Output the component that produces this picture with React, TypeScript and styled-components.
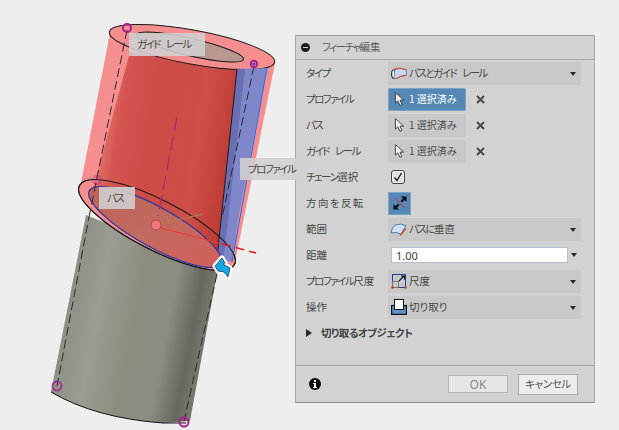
import React from 'react';
import styled, { createGlobalStyle } from 'styled-components';

const GlobalStyle = createGlobalStyle`
    html, body {
        margin: 0;
        padding: 0;
        background: #eeeeee;
    }
    * {
        box-sizing: border-box;
    }
`

const Dashes = styled.line`
    stroke: #2c2c2c;
    stroke-width: 1;
    stroke-dasharray: 9 4;
`

const Ring = styled.circle`
    fill: none;
    stroke: #a5208f;
    stroke-width: 2;
`

const ARROW = 'M215,266 L222,258 L225,263 L223,264 L230,268 L228,277 L224,272 L218,271 Z'

const ModelDrawing = () => (
    <svg width="295" height="430" viewBox="0 0 295 430">
        <defs>
            <linearGradient id="steel" gradientUnits="userSpaceOnUse" x1="52" y1="300" x2="218" y2="332">
                <stop offset="0" stopColor="#84847b" />
                <stop offset="0.12" stopColor="#8f9086" />
                <stop offset="0.28" stopColor="#9b9c92" />
                <stop offset="0.5" stopColor="#8d8d7e" />
                <stop offset="0.7" stopColor="#8b8c83" />
                <stop offset="0.85" stopColor="#67675f" />
                <stop offset="1" stopColor="#85857c" />
            </linearGradient>
            <linearGradient id="bore" gradientUnits="userSpaceOnUse" x1="88" y1="110" x2="240" y2="135">
                <stop offset="0" stopColor="#f58f8b" />
                <stop offset="0.22" stopColor="#d4544f" />
                <stop offset="0.45" stopColor="#cc4b45" />
                <stop offset="0.75" stopColor="#cd4f48" />
                <stop offset="1" stopColor="#bc3832" />
            </linearGradient>
            <linearGradient id="cutFace" gradientUnits="userSpaceOnUse" x1="85" y1="190" x2="220" y2="265">
                <stop offset="0" stopColor="#bb6157" />
                <stop offset="0.5" stopColor="#c26a60" />
                <stop offset="1" stopColor="#d25e58" />
            </linearGradient>
        </defs>

        <path d="M86,215 L51,392 Q95,418 163,423 L190,421 L218,268 Z" fill="url(#steel)" />
        <path d="M51,392 Q95,418 163,423 L186,423" fill="none" stroke="#111" strokeWidth="1" />

        <path d="M110,33 L275,63 L235,262 L80,188 Z" fill="#f58f8f" />
        <ellipse cx="157" cy="225" rx="87" ry="25" transform="rotate(27 157 225)" fill="#f58f8f" stroke="#1a1a1a" />
        <path d="M130,52 L238,70 L217,255 L214,268 L92,192 Z" fill="url(#bore)" />

        <ellipse cx="192" cy="47" rx="84" ry="17" transform="rotate(10.4 192 47)" fill="#f58f8f" stroke="#1a1a1a" />
        <ellipse cx="190" cy="47" rx="55" ry="8.7" transform="rotate(13 190 47)" fill="#b9978f" stroke="#1a1a1a" />

        <path d="M237,69 L267,68 L238,220 L232,262 L217,258 Z" fill="#7f87ca" />
        <path d="M237,69 L245,69 L224,256 L217,258 Z" fill="#6a6eb2" />
        <line x1="237" y1="69" x2="217" y2="258" stroke="#1a1a1a" />
        <line x1="267" y1="68" x2="232" y2="262" stroke="#1f6cf0" />

        <ellipse cx="155" cy="227" rx="75" ry="20" transform="rotate(29 155 227)" fill="url(#cutFace)" stroke="#2338a8" strokeWidth="1.2" />
        <ellipse cx="157" cy="225" rx="87" ry="25" transform="rotate(27 157 225)" fill="none" stroke="#1a1a1a" />

        <Dashes x1="127" y1="30" x2="90" y2="212" />
        <Dashes x1="90" y1="212" x2="57" y2="386" />
        <Dashes x1="254" y1="66" x2="222" y2="218" />
        <Dashes x1="217" y1="274" x2="184" y2="421" />

        <line x1="177" y1="117" x2="158" y2="216" stroke="#b32c6e" strokeWidth="1.5" strokeDasharray="14 6" />
        <line x1="155" y1="225" x2="203" y2="214" stroke="#a8843a" strokeWidth="1" />
        <line x1="158" y1="227" x2="222" y2="244" stroke="#ee3a3a" strokeWidth="1.2" />
        <line x1="222" y1="244" x2="256" y2="253" stroke="#e8141c" strokeWidth="1.5" strokeDasharray="9 5" />
        <circle cx="156" cy="225" r="5" fill="#ef7a7a" stroke="#c43c58" strokeWidth="1" />

        <Ring cx="127" cy="28" r="4" />
        <Ring cx="97" cy="180" r="4" opacity="0.4" />
        <Ring cx="254" cy="64" r="3.2" />
        <circle cx="254" cy="64" r="1.6" fill="#5a3aa8" />
        <Ring cx="57" cy="386" r="4.5" opacity="0.75" />
        <Ring cx="184" cy="422" r="4.5" />

        <path d={ARROW} fill="#ffffff" stroke="#ffffff" strokeWidth="5" strokeLinejoin="round" />
        <path d={ARROW} fill="#12a8e6" stroke="#10303f" strokeWidth="0.7" strokeLinejoin="round" />
    </svg>
)

const PathRailIcon = () => (
    <svg width="16" height="13" viewBox="0 0 16 13">
        <ellipse cx="2.6" cy="7" rx="2" ry="4.2" fill="#f4f4f4" stroke="#222" strokeWidth="1.1" />
        <path d="M4,2.5 Q9,0 15.5,3 L15.5,8 Q10,8 6,11.5 L3,11.5 Z" fill="#c6d8ea" stroke="#5b7fa8" strokeWidth="0.8" />
        <path d="M3,2.5 Q9,-0.2 15.5,3" fill="none" stroke="#d8413a" strokeWidth="1.2" />
        <path d="M5,11.5 Q10,8.5 15.5,8.5" fill="none" stroke="#d8413a" strokeWidth="1" />
    </svg>
)

const NormalIcon = () => (
    <svg width="17" height="13" viewBox="0 0 17 13">
        <path d="M1,10 Q2,4 5,2 Q11,0 16,2.5 L14,6 L11,11 Q7,8.5 1,10 Z" fill="#cfe0f0" stroke="#4f7cb0" strokeWidth="1" />
        <line x1="10" y1="12.5" x2="16" y2="5.5" stroke="#d8412f" strokeWidth="1.2" />
    </svg>
)

const ScaleIcon = () => (
    <svg width="16" height="16" viewBox="0 0 16 16">
        <rect x="1.5" y="1.5" width="13" height="13" fill="none" stroke="#1c3f9c" strokeWidth="1" />
        <rect x="1.5" y="8.5" width="6" height="6" fill="none" stroke="#777" strokeWidth="1" />
        <path d="M8,8 L13,3 M10,3 L13.5,3 L13.5,6.5" fill="none" stroke="#111" strokeWidth="1.1" />
        <circle cx="1.5" cy="14.5" r="1.2" fill="#c8322c" />
        <circle cx="14.5" cy="14.5" r="1.2" fill="#c8322c" />
    </svg>
)

const CutIcon = () => (
    <svg width="16" height="16" viewBox="0 0 16 16">
        <rect x="0.6" y="6.5" width="14.8" height="8.9" fill="#5c94c8" stroke="#111" strokeWidth="1.2" />
        <rect x="3.5" y="0.5" width="9" height="10" fill="#ffffff" stroke="#111" strokeWidth="1" />
    </svg>
)

const ArrowCursor = () => (
    <svg width="11" height="16" viewBox="0 0 12 16">
        <path d="M1.5,1 L1.5,12.5 L4.2,10 L6.5,15 L8.6,14 L6.5,9.2 L10.5,9.2 Z" fill="#f4f4f4" stroke="#3a3a3a" strokeWidth="1" />
    </svg>
)

const FlipIcon = () => (
    <svg width="14" height="14" viewBox="0 0 14 14">
        <path d="M0.5,13.5 L0.5,8 L2.5,10 L5,7.5 L6.5,9 L4,11.5 L6,13.5 Z" fill="#0c0c0c" />
        <path d="M13.5,0.5 L13.5,6 L11.5,4 L9,6.5 L7.5,5 L10,2.5 L8,0.5 Z" fill="#0c0c0c" />
        <line x1="2" y1="2" x2="12" y2="12" stroke="#e0202c" strokeWidth="1" />
    </svg>
)

const RemoveIcon = () => (
    <svg width="9" height="9" viewBox="0 0 9 9">
        <path d="M1,1 L8,8 M8,1 L1,8" stroke="#4a4a4a" strokeWidth="2" />
    </svg>
)

const InfoIcon = () => (
    <svg width="12" height="12" viewBox="0 0 12 12">
        <circle cx="6" cy="6" r="6" fill="#0a0a0a" />
        <rect x="5" y="2" width="2" height="2" fill="#ffffff" />
        <path d="M4,5 H7 V9 H8 V10 H4 V9 H5 V6 H4 Z" fill="#ffffff" />
    </svg>
)

const CheckMark = () => (
    <svg width="10" height="10" viewBox="0 0 10 10">
        <path d="M1.5,5.5 L4,8.5 L8.5,1" fill="none" stroke="#111" strokeWidth="1.3" />
    </svg>
)

const Dropdown = ({ icon, children }: { icon: React.ReactNode; children: React.ReactNode }) => (
    <DropdownBox>
        <DropdownIcon>{icon}</DropdownIcon>
        <span>{children}</span>
        <Caret />
    </DropdownBox>
)

const Selection = ({ active }: { active?: boolean }) => (
    <>
        <SelectButton $active={active}>
            <ArrowCursor />
            <span>1 選択済み</span>
        </SelectButton>
        <RemoveSlot>
            <RemoveIcon />
        </RemoveSlot>
    </>
)

const App = () => {
    return (
        <Page>
            <GlobalStyle />
            <Viewport>
                <ModelDrawing />
                <Callout $left={129} $top={33} $width={76} $height={23}><Kana>ガイド レール</Kana></Callout>
                <Callout $left={99} $top={187} $width={36} $height={22}><Kana>パス</Kana></Callout>
                <Callout $left={240} $top={158} $width={66} $height={22}><Kana>プロファイル</Kana></Callout>
            </Viewport>
            <Panel>
                <PanelTitle>
                    <MinusBadge />
                    <span><Kana>フィーチャ</Kana>編集</span>
                </PanelTitle>
                <PanelBody>
                    <Row>
                        <Label><Kana>タイプ</Kana></Label>
                        <Dropdown icon={<PathRailIcon />}><Kana>パスとガイド レール</Kana></Dropdown>
                    </Row>
                    <Row>
                        <Label><Kana>プロファイル</Kana></Label>
                        <Selection active />
                    </Row>
                    <Row>
                        <Label><Kana>パス</Kana></Label>
                        <Selection />
                    </Row>
                    <Row>
                        <Label><Kana>ガイド レール</Kana></Label>
                        <Selection />
                    </Row>
                    <Row>
                        <Label><Kana>チェーン</Kana>選択</Label>
                        <CheckBox>
                            <CheckMark />
                        </CheckBox>
                    </Row>
                    <Row>
                        <Label><Airy>方向を反転</Airy></Label>
                        <FlipButton>
                            <FlipIcon />
                        </FlipButton>
                    </Row>
                    <Row>
                        <Label>範囲</Label>
                        <Dropdown icon={<NormalIcon />}><Kana>パスに</Kana>垂直</Dropdown>
                    </Row>
                    <Row>
                        <Label>距離</Label>
                        <DistanceInput>1.00</DistanceInput>
                        <InputCaret />
                    </Row>
                    <Row>
                        <Label><Kana>プロファイル</Kana>尺度</Label>
                        <Dropdown icon={<ScaleIcon />}>尺度</Dropdown>
                    </Row>
                    <Row>
                        <Label>操作</Label>
                        <Dropdown icon={<CutIcon />}>切り取り</Dropdown>
                    </Row>
                    <Row>
                        <SectionArrow />
                        <SectionTitle>切り取るオブジェクト</SectionTitle>
                    </Row>
                </PanelBody>
                <PanelFooter>
                    <InfoIcon />
                    <FooterButtons>
                        <OkButton>OK</OkButton>
                        <CancelButton>キャンセル</CancelButton>
                    </FooterButtons>
                </PanelFooter>
            </Panel>
        </Page>
    );
};

export default App;

const Page = styled.div`
    display: flex;
    align-items: flex-start;
    width: 619px;
    height: 430px;
    overflow: hidden;
    background: #eeeeee;
    color: #484848;
    font-family: "Noto Sans CJK JP", "Noto Sans", sans-serif;
    font-size: 10.5px;
    font-feature-settings: "palt";
    line-height: 1;
`

const Kana = styled.span`
    letter-spacing: -1.5px;
    word-spacing: 5px;
`

const Airy = styled.span`
    letter-spacing: 1.4px;
`

const Viewport = styled.div`
    position: relative;
    flex: 0 0 295px;
    height: 430px;

    svg {
        display: block;
    }
`

const Callout = styled.div<{ $left: number; $top: number; $width: number; $height: number }>`
    position: absolute;
    z-index: 2;
    left: ${p => p.$left}px;
    top: ${p => p.$top}px;
    width: ${p => p.$width}px;
    height: ${p => p.$height}px;
    padding-left: 8px;
    display: flex;
    align-items: center;
    background: rgba(208, 208, 208, 0.88);
    white-space: nowrap;
`

const Panel = styled.section`
    display: flex;
    flex-direction: column;
    flex: 0 0 300px;
    height: 368px;
    margin-top: 35px;
    background: #d2d2d2;
    border-top: 1px solid #9c9c9c;
    border-bottom: 1px solid #8c8c8c;
    border-left: 1px solid #a8a8a8;
    border-right: 1px solid #a8a8a8;
`

const PanelTitle = styled.header`
    display: flex;
    align-items: center;
    gap: 12px;
    height: 24px;
    padding-left: 5px;
    border-bottom: 1px solid #a8a8a8;
    color: #5c5c5c;
`

const MinusBadge = styled.span`
    position: relative;
    width: 9px;
    height: 9px;
    border-radius: 50%;
    background: #1c1c1c;

    &::after {
        content: "";
        position: absolute;
        left: 2px;
        top: 4px;
        width: 5px;
        height: 1px;
        background: #d2d2d2;
    }
`

const PanelBody = styled.div`
    display: flex;
    flex-direction: column;
    flex: 1;
`

const Row = styled.div`
    display: flex;
    align-items: center;
    height: 26px;
    padding-left: 10px;
`

const Label = styled.span`
    flex: 0 0 82px;
    white-space: nowrap;
`

const DropdownBox = styled.div`
    position: relative;
    display: flex;
    align-items: center;
    width: 193px;
    height: 23px;
    background: #c8c8c8;
    border-radius: 1px;
`

const DropdownIcon = styled.span`
    display: flex;
    align-items: center;
    justify-content: center;
    flex: 0 0 21px;
    height: 100%;

    svg {
        display: block;
    }
`

const Caret = styled.span`
    position: absolute;
    right: 5px;
    top: 10px;
    width: 0;
    height: 0;
    border-left: 3px solid transparent;
    border-right: 3px solid transparent;
    border-top: 4px solid #2a2a2a;
`

const InputCaret = styled(Caret)`
    position: static;
    margin-left: 3px;
`

const SelectButton = styled.button<{ $active?: boolean }>`
    display: flex;
    align-items: center;
    gap: 4px;
    width: 78px;
    height: 23px;
    padding: 0 0 0 5px;
    border: 1px solid ${p => (p.$active ? '#7aa3c6' : '#c8c8c8')};
    border-radius: 1px;
    background: ${p => (p.$active ? '#5588b4' : '#c8c8c8')};
    color: ${p => (p.$active ? '#ffffff' : '#4a4a4a')};
    font: inherit;
    font-size: 10px;
    font-feature-settings: inherit;
    white-space: nowrap;
`

const RemoveSlot = styled.span`
    display: flex;
    margin-left: 10px;
`

const CheckBox = styled.span`
    display: flex;
    align-items: center;
    justify-content: center;
    width: 14px;
    height: 14px;
    margin-left: 3px;
    border: 1px solid #444444;
    border-radius: 3px;
    background: #e0e0e0;
    box-shadow: inset 0 0 0 1px #f2f2f2;
`

const FlipButton = styled.span`
    display: flex;
    align-items: center;
    justify-content: center;
    width: 23px;
    height: 23px;
    background: #5588b4;
    border: 1px solid #7aa3c6;
`

const DistanceInput = styled.div`
    display: flex;
    align-items: center;
    width: 177px;
    height: 16px;
    margin-left: 3px;
    padding-left: 4px;
    background: #ffffff;
    border: 1px solid #b9bdca;
    color: #3c3c3c;
    font-family: "Noto Sans", sans-serif;
    font-size: 11px;
`

const SectionArrow = styled.span`
    width: 0;
    height: 0;
    border-top: 4px solid transparent;
    border-bottom: 4px solid transparent;
    border-left: 6px solid #2a2a2a;
    margin-right: 9px;
`

const SectionTitle = styled.strong`
    font-weight: 700;
    color: #444444;
    letter-spacing: -0.5px;
`

const PanelFooter = styled.footer`
    display: flex;
    align-items: center;
    justify-content: space-between;
    height: 37px;
    padding: 0 16px 0 13px;
    border-top: 1px solid #a8a8a8;
`

const FooterButtons = styled.div`
    display: flex;
    align-items: center;
    gap: 10px;
`

const OkButton = styled.button`
    width: 60px;
    height: 18px;
    padding: 0;
    background: #e6e6e6;
    border: 1px solid #b4b4b4;
    color: #8a8a8a;
    font-family: "Noto Sans", sans-serif;
    font-size: 12px;
`

const CancelButton = styled.button`
    width: 60px;
    height: 21px;
    padding: 0;
    background: #ececec;
    border: 1px solid #ababab;
    color: #555555;
    font: inherit;
    font-feature-settings: inherit;
    letter-spacing: -0.4px;
`
